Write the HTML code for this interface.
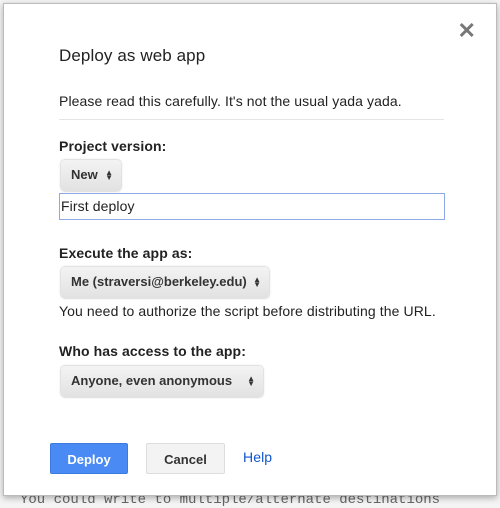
<!DOCTYPE html>
<html><head><style>
body{margin:0;width:500px;height:506px;background:#f4f4f4;position:relative;overflow:hidden;font-family:"Liberation Sans",Arial,sans-serif;color:#222}
.bg{position:absolute;left:20px;top:492px;font-family:"Liberation Mono",monospace;font-size:14px;color:#666}
.dlg{position:absolute;left:3px;top:3px;width:492px;height:491px;background:#fff;border:1px solid #bbb;box-shadow:0 2px 6px rgba(0,0,0,.3)}
.a{position:absolute;white-space:nowrap;letter-spacing:0.1px}
.sel{position:absolute;background:linear-gradient(#f3f3f3,#e2e2e2);border-radius:4px;box-shadow:0 0 2px rgba(0,0,0,.35);font-weight:bold;font-size:13px;color:#333;box-sizing:border-box;padding-left:10px;line-height:30px}
.sel span{position:absolute;right:8px;font-size:8px;line-height:5px;top:10px}
.btn{position:absolute;height:31px;line-height:31px;text-align:center;font-weight:bold;font-size:13px;border-radius:2px;box-sizing:border-box}
</style></head><body>
<div class="bg">You could write to multiple/alternate destinations</div>
<div class="dlg">
<div class="a" style="right:20px;top:14px;font-size:22px;color:#777;font-weight:bold">✕</div>
<div class="a" style="left:55px;top:42px;font-size:17px">Deploy as web app</div>
<div class="a" style="left:55px;top:89px;font-size:14px">Please read this carefully. It's not the usual yada yada.</div>
<div class="a" style="left:55px;top:115px;width:385px;height:1px;background:#e5e5e5"></div>
<div class="a" style="left:55px;top:134px;font-size:14px;font-weight:bold">Project version:</div>
<div class="sel" style="left:57px;top:156px;width:60px;height:31px">New<span>▲<br>▼</span></div>
<div class="a" style="left:55px;top:189px;width:386px;height:27px;border:1px solid #8fa8e8;box-sizing:border-box;font-size:14px;line-height:25px;padding-left:1px">First deploy</div>
<div class="a" style="left:55px;top:241px;font-size:14px;font-weight:bold">Execute the app as:</div>
<div class="sel" style="left:57px;top:263px;width:208px;height:31px">Me (straversi@berkeley.edu)<span>▲<br>▼</span></div>
<div class="a" style="left:55px;top:299px;font-size:14px">You need to authorize the script before distributing the URL.</div>
<div class="a" style="left:55px;top:339px;font-size:14px;font-weight:bold">Who has access to the app:</div>
<div class="sel" style="left:57px;top:362px;width:202px;height:31px">Anyone, even anonymous<span>▲<br>▼</span></div>
<div class="btn" style="left:46px;top:439px;width:78px;background:#4a8af4;border:1px solid #3b7be0;color:#fff">Deploy</div>
<div class="btn" style="left:142px;top:439px;width:79px;background:#f3f3f3;border:1px solid #ddd;color:#333">Cancel</div>
<div class="a" style="left:239px;top:445px;font-size:14px;color:#1155cc">Help</div>
</div>
</body></html>
